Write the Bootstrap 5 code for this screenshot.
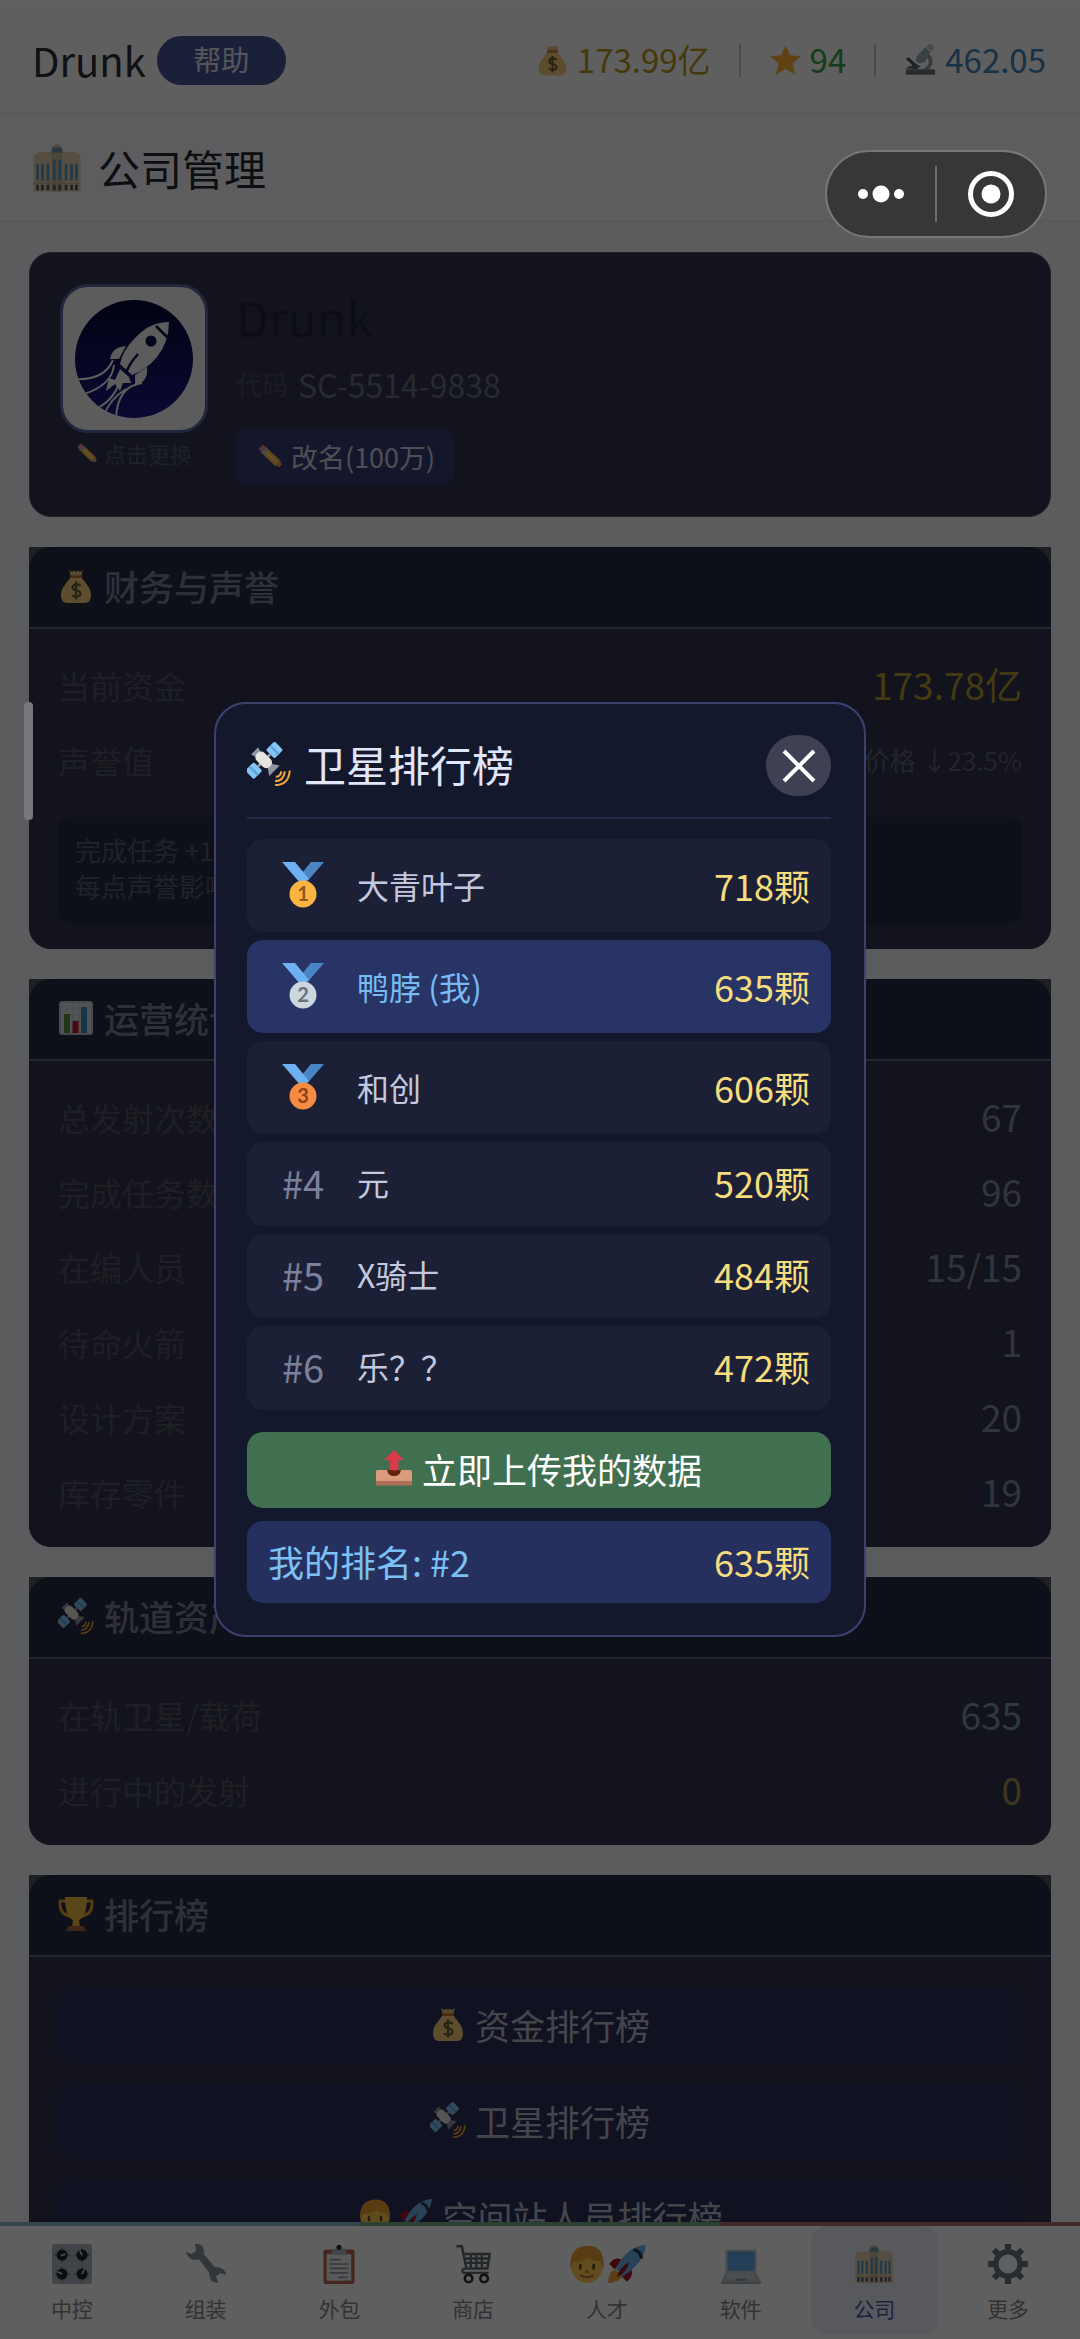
<!DOCTYPE html>
<html lang="zh-CN">
<head>
<meta charset="utf-8">
<meta name="viewport" content="width=device-width, initial-scale=1">
<title>公司管理</title>
<link rel="stylesheet" href="https://cdn.jsdelivr.net/npm/bootstrap@5.3.0/dist/css/bootstrap.min.css">
<style>
  body { font-family: "Noto Sans CJK SC", sans-serif; background: #f0f3f8; color: #2a2d36; overflow: hidden; line-height: 1.5; }
  a { text-decoration: none; }
  svg { display: block; flex: none; }
  .ico { width: 36px; height: 36px; }
  .ico-lg { width: 50px; height: 50px; }
  .ico-sm { width: 26px; height: 26px; }

  .topbar { height: 114px; padding: 6px 34px 0 32px; background: #fdfdfd; border-top: 2px solid #fff; border-bottom: 2px solid #ebecee; }
  .player { font-size: 40px; margin-right: 11px; }
  .help-btn { width: 129px; height: 49px; border-radius: 25px; background: #485698; color: #e2e4f0; font-size: 28px; line-height: 1; padding: 0 0 2px; }
  .stats { font-size: 33px; gap: 28px; }
  .stats .ico { width: 33px; height: 34px; }
  .stats .vr { width: 2px; height: 32px; align-self: center; background: #222; }
  .c-gold { color: #b8961e; } .c-green { color: #38a04c; } .c-blue { color: #3f82bb; }

  .titlebar { height: 108px; padding: 2px 32px 0; background: #f6f8fc; border-bottom: 2px solid #e8eaee; font-size: 42px; color: #23262f; }
  main { padding: 30px 29px; }
  .stack { display: flex; flex-direction: column; gap: 30px; }

  .profile { border: 1px solid #50535f; border-radius: 22px; background: #30334b; padding: 31px 30px; }
  .logo-box { width: 148px; height: 149px; border-radius: 28px; border: 3px solid #5a66a0; background: #f4f4f4; }
  .logo-box svg { width: 120px; height: 120px; }
  .swap { font-size: 22px; line-height: 40px; color: #505872; gap: 6px; background: none; border: 0; padding: 0; }
  .company { font-size: 48px; line-height: 64px; color: #232639; }
  .code-line { font-size: 26px; line-height: 48px; color: #464a5a; margin: 12px 0 21px; }
  .code-no { font-size: 32px; color: #6b7080; margin-left: 10px; }
  .rename { height: 56px; border-radius: 12px; background: #363f74; color: #cfd2de; font-size: 27px; line-height: 1; padding: 0 18px 2px 20px; gap: 8px; }

  .panel { border: 0; border-radius: 0 0 22px 22px; background: #50535f; overflow: hidden; }
  .panel .card-header { height: 82px; border-radius: 22px 22px 0 0; border-bottom: 2px solid #61656f; background: #242a42; color: #7c8195; font-size: 35px; padding: 0 29px 2px; gap: 10px; }
  .panel .card-body { background: #30334a; padding: 20px 29px 16px; color: #50535f; font-size: 32px; }
  .kv { height: 75px; padding-bottom: 4px; }
  .kv dt { font-weight: 400; }
  .kv dd { margin: 0; font-size: 37px; color: #848ba0; }
  .kv .v-gold { color: #b59a32; } .kv .v-teal { color: #7a98a2; } .kv .v-amber { color: #a69350; }
  .kv .v-note { font-size: 26px; color: #5d6172; }
  .note { background: #262b43; border-radius: 14px; padding: 15px 17px 19px; margin: 18px 0 10px; font-size: 26px; line-height: 36px; color: #565a69; }
  .rank-btn { width: 100%; height: 76px; border-radius: 18px; background: #2c3059; color: #b8bac6; font-size: 35px; line-height: 1; gap: 9px; padding: 0 12px 4px; }
  .rank-list { gap: 20px; padding-top: 11px; }

  .tabs { height: 117px; background: #fdfdfd; border-top: 4px solid; border-image: linear-gradient(90deg, #86b9c6 0 33.3%, #77ae86 33.3% 66.6%, #b56d72 66.6%) 1; padding: 0 5px 3px; }
  .tabs a { height: 109px; margin: 0 3px; border-radius: 16px; color: #84868c; font-size: 21px; line-height: 32px; padding-top: 18px; gap: 8px; }
  .tabs a.active { background: #e8ebf8; color: #4a5ba5; }
  .tabs .ico { width: 40px; height: 40px; }

  .modal-backdrop { --bs-backdrop-opacity: .625; }
  .modal-dialog { max-width: 652px; }
  .board { border: 2px solid #3b4270; border-radius: 32px; background: #14182d; padding: 31px 33px 32px 31px; color: #e2e6fa; }
  .board .modal-header { padding: 0 0 21px; border-bottom: 2px solid #272c4a; border-radius: 0; font-size: 42px; }
  .board h2 { font-size: 42px; line-height: 56px; font-weight: 400; gap: 13px; padding-bottom: 4px; }
  .close-btn { width: 65px; height: 61px; border-radius: 31px; background: #3e4154; }
  .score-row { border-radius: 16px; background: #1c2036; padding: 0 21px 4px 20px; height: 84px; color: #c4c8de; font-size: 32px; }
  .score-row.medal { height: 93px; padding-bottom: 2px; }
  .score-row.me { background: #273465; color: #78baf2; }
  .place { width: 72px; margin-right: 18px; font-size: 38px; color: #7c809c; }
  .place svg { width: 42px; height: 46px; }
  .score { font-size: 36px; color: #f5dc7c; }
  .upload { height: 76px; margin: 22px 0 13px; border-radius: 16px; background: #40704f; color: #fff; font-size: 35px; line-height: 1; gap: 10px; padding: 0 12px 4px; }
  .mine { height: 82px; border-radius: 16px; background: #26305e; color: #7cc0f5; font-size: 36px; padding: 0 21px 2px; }

  .capsule { position: fixed; z-index: 1100; top: 150px; right: 33px; width: 222px; height: 88px; border: 2px solid #77787a; border-radius: 44px; background: #373737; }
  .capsule button { flex: 1; background: none; border: 0; height: 84px; padding: 0; display: flex; align-items: center; justify-content: center; }
  .capsule i { width: 2px; height: 56px; background: #6c6c6c; }
  .edge-bar { position: fixed; z-index: 1100; top: 702px; left: 24px; width: 9px; height: 118px; border-radius: 4px; background: #76777a; }
</style>
<script src="https://cdn.jsdelivr.net/npm/bootstrap@5.3.0/dist/js/bootstrap.bundle.min.js"></script>
</head>
<body>

<svg width="0" height="0" class="position-absolute" aria-hidden="true">
  <defs>
    <symbol id="bag" viewBox="0 0 36 36"><path d="M11 2l3 2 2-1.500 2 1.500 2-1.500 2 1.500 3-2-2 7H13z" fill="#f0c078"/><path d="M12.500 9h11C26 14 33 19 33 27c0 5-2 8-6 8H9c-4 0-6-3-6-8 0-8 7-13 9.500-18z" fill="#f5cc7e"/><path d="M12 7.500h12v2.500H12z" fill="#b87333"/><path d="M22.500 18c-1-2-8-2.500-8 1.500s8 2 8 6-7 4-8.500 1.500M18 13.500v18" fill="none" stroke="#6b5b3a" stroke-width="2.200"/></symbol>
    <symbol id="star" viewBox="0 0 36 36"><path d="M18 1.500l4.800 11.300 12.200 1-9.300 8L28.600 34 18 27.500 7.400 34l2.900-12.200-9.300-8 12.200-1z" fill="#ffac33"/></symbol>
    <symbol id="scope" viewBox="0 0 36 36"><path d="M24 10c9 3 9 13 3 18h-6c7-4 8-10 3-14z" fill="#8899a6"/><path d="M3 28h29q2 0 2 3v3H2v-3q0-3 1-3z" fill="#66757f"/><path d="M14 14l9-10 6 5-6 11-7 2-3-3z" fill="#99aab5"/><path d="M24 4l4-4 5 3-2 6z" fill="#b8c6d0"/><path d="M2 17l3-2 10 9-2 3z" fill="#4a5560"/><path d="M1 27l12-5 5 3-4 3z" fill="#58636d"/></symbol>
    <symbol id="building" viewBox="0 0 36 36"><path d="M1 35V11q0-4 5-4.500h8q0-5.500 4-5.500t4 5.500h8q5 .5 5 4.500v24z" fill="#e3cfaa"/><path d="M14 5h8v30h-8z" fill="#cdbc9c"/><path d="M14.500 3h7l.5 4h-8z" fill="#6b99b4"/><path d="M16 1h4v2h-4z" fill="#dcc59a"/><path d="M4 15v12M7.500 15v12M11.500 15v12M16 12v15M20 12v15M24.500 15v12M28.500 15v12M32 15v12" stroke="#5598c0" stroke-width="1.900"/><path d="M4 30v4M7.500 30v4M11.500 30v4M16 30v4M20 30v4M24.500 30v4M28.500 30v4M32 30v4" stroke="#55585d" stroke-width="2"/><path d="M1 29h34" stroke="#cbb893"/></symbol>
    <symbol id="pencil" viewBox="0 0 36 36"><path d="M2 8l6-6 5 4-7 7z" fill="#e87f96"/><path d="M5.500 13l7.500-7 3 3-7.500 7z" fill="#b7c2ca"/><path d="M8.500 16L16 9l16 15-7 8z" fill="#f6bd41"/><path d="M12 12l17 16" stroke="#ffd983" stroke-width="3"/><path d="M25 32l7-8 3 10z" fill="#d6a06b"/><path d="M31 34l3-4 1 5z" fill="#292f33"/></symbol>
    <symbol id="chart" viewBox="0 0 36 36"><rect x="1" y="1" width="34" height="34" rx="3" fill="#b9c4cc"/><rect x="3" y="3" width="30" height="30" fill="#d9e0e4"/><path d="M3 9h30M3 15h30M3 21h30M3 27h30M9 3v30M15 3v30M21 3v30M27 3v30" stroke="#c2ccd2" stroke-width=".8"/><path fill="#5c913b" d="M6 14h6v19H6z"/><path fill="#be1931" d="M14.500 21h6v12h-6z"/><path fill="#4289c1" d="M23 7h6v26h-6z"/></symbol>
    <symbol id="sat" viewBox="0 0 36 36"><g transform="rotate(-45 14 15)"><rect x="-3" y="10" width="10" height="10" rx="1.500" fill="#86c5f5"/><path d="M2 10v10" stroke="#5ba5dd" stroke-width="2"/><rect x="21" y="10" width="10" height="10" rx="1.500" fill="#86c5f5"/><path d="M26 10v10" stroke="#5ba5dd" stroke-width="2"/><path d="M7 15h14" stroke="#99a6b0" stroke-width="2"/><path d="M11 8l-1-4h8l-1 4zM12 21h4l4 6H8z" fill="#8d979e"/><rect x="9.500" y="7" width="9" height="15" rx="4" fill="#e5e4df"/></g><path d="M23 32q7 0 8-8M23.500 28.500q4 0 4.500-4.500M23 35.300q11 0 12-12" fill="none" stroke="#f0a43c" stroke-width="1.700"/></symbol>
    <symbol id="cup" viewBox="0 0 36 36"><path d="M8 5H2q-1 14 11 15M28 5h6q1 14-11 15" fill="none" stroke="#dfa12e" stroke-width="3"/><path d="M7 1h22q0 20-8 23l1 7h-8l1-7Q7 21 7 1z" fill="#f0bd42"/><path d="M11 30h14l3 5H8z" fill="#b0653c"/></symbol>
    <symbol id="boy" viewBox="0 0 36 36"><ellipse cx="18" cy="19" rx="14.500" ry="16" fill="#ffcb4c"/><path d="M3 21Q2 2 18 1.500T33 21q-2 0-3-6-7 1-10-3-5 4-14 4-1 3-3 5z" fill="#eb9d35"/><path d="M12 19v3M24 19v3" stroke="#664e27" stroke-width="2.500" stroke-linecap="round"/><path d="M12 28q6 4 12 0" fill="none" stroke="#c1694f" stroke-width="2"/><path d="M16.500 25h3" stroke="#c1694f" stroke-width="2"/></symbol>
    <symbol id="rocket" viewBox="0 0 36 36"><path d="M2 18q5-7 11-4l-6 9zM18 34q6-5 4-11l-9 6z" fill="#a0182b"/><path d="M1 35q0-9 6-12l7 6q-4 6-13 6z" fill="#f4a63a"/><path d="M35 1Q18 2 8 22l6 7Q33 18 35 1z" fill="#6bb0ea"/><path d="M24 5q6 1 7 8" fill="none" stroke="#2d3a46" stroke-width="3"/><path d="M9 30q1-8 11-14-2 10-11 14z" fill="#a0182b"/></symbol>
    <symbol id="dials" viewBox="0 0 36 36"><rect width="36" height="36" rx="3" fill="#a9b6bf"/><g stroke="#66757f"><path d="M2 10h14M9 3v14M20 10h14M27 3v14M2 27h14M9 20v14M20 27h14M27 20v14"/></g><g fill="#202427"><circle cx="9" cy="10" r="5"/><circle cx="27" cy="10" r="5"/><circle cx="9" cy="27" r="5"/><circle cx="27" cy="27" r="5"/></g><path d="M8 10.500l4-1.500M27 10l-2-4M9 27l-4-2M27 27l2-4" stroke="#ccd6dd" stroke-width="1.500"/></symbol>
    <symbol id="wrench" viewBox="0 0 36 36"><path d="M8 0q9-1 8 9l10 12q9-1 10 7l-5-2-4 3 2 6q-9 0-8-9L12 14Q2 16 0 7l5 2 4-3z" fill="#80929f"/></symbol>
    <symbol id="clip" viewBox="0 0 36 36"><rect x="4" y="5" width="28" height="31" rx="2" fill="#b8664a"/><path d="M7 9h22v24H7z" fill="#eef0f2"/><path d="M10 10l3-6h3q2-4 4 0h3l3 6z" fill="#aebac3"/><circle cx="18" cy="3" r="2.300" fill="#292f33"/><path d="M9.500 14h10M9.500 18h17M9.500 22h17M9.500 26h17M17 30h9" stroke="#8899a6" stroke-width="1.500"/></symbol>
    <symbol id="cart" viewBox="0 0 36 36"><path d="M3 2h5l4 20h20M9 9h24l-2 13M9 26q-2-4 3-4M9 26h23M16 9v13M21 9v13M26 9v13M10 13h22M11 17h20" fill="none" stroke="#5d6a74" stroke-width="2.200"/><circle cx="14" cy="31" r="3.400" fill="#fff" stroke="#292f33" stroke-width="2.300"/><circle cx="28" cy="31" r="3.400" fill="#fff" stroke="#292f33" stroke-width="2.300"/></symbol>
    <symbol id="laptop" viewBox="0 0 36 36"><path d="M4 5h28v21H4z" fill="#b9c6cf"/><path d="M6 7h24v17H6z" fill="#5da4e4"/><path d="M4 26h28l4 8H0z" fill="#b9c4cb"/><path d="M0 34h36v2H0z" fill="#9aa9b4"/><path d="M6 28h24M5 30h26" stroke="#d7dee2"/><path d="M14 31h8l1 2H13z" fill="#8899a6"/></symbol>
    <symbol id="gear" viewBox="0 0 36 36"><g fill="none" stroke="#66757f"><circle cx="18" cy="18" r="11" stroke-width="5"/><path d="M18 0v7M18 29v7M0 18h7M29 18h7M5.300 5.300l5 5M25.700 25.700l5 5M5.300 30.700l5-5M25.700 10.300l5-5" stroke-width="5.500"/></g></symbol>
    <symbol id="ribbon" viewBox="0 0 42 46"><path d="M42 0H29L15 17l8 5z" fill="#4a86c5"/><path d="M0 0h13l14 17-8 5z" fill="#6db1f2"/></symbol>
    <symbol id="outbox" viewBox="0 0 36 36"><rect y="20" width="36" height="15" rx="1.500" fill="#d99b7c"/><path d="M0 31h36v3q0 1.500-2 1.500H2Q0 35.500 0 34z" fill="#b06f58"/><path d="M11 20h14q-1 6-7 6t-7-6z" fill="#662113"/><path d="M18 0l10 10h-5.500v9q-4.500 3-9 0v-9H8z" fill="#db3a4a"/></symbol>
  </defs>
</svg>

<header class="topbar d-flex align-items-center justify-content-between">
  <div class="d-flex align-items-center">
    <span class="player">Drunk</span>
    <button type="button" class="btn help-btn">帮助</button>
  </div>
  <div class="stats d-flex align-items-center">
    <span class="d-flex align-items-center gap-2 c-gold"><svg class="ico" aria-hidden="true"><use href="#bag"/></svg>173.99亿</span>
    <span class="vr"></span>
    <span class="d-flex align-items-center gap-2 c-green"><svg class="ico" aria-hidden="true"><use href="#star"/></svg>94</span>
    <span class="vr"></span>
    <span class="d-flex align-items-center gap-2 c-blue"><svg class="ico" aria-hidden="true"><use href="#scope"/></svg>462.05</span>
  </div>
</header>

<h1 class="titlebar d-flex align-items-center gap-3 m-0 fw-normal"><svg class="ico-lg" aria-hidden="true"><use href="#building"/></svg>公司管理</h1>

<main class="stack">
  <section class="profile d-flex align-items-start">
    <div class="d-flex flex-column align-items-center">
      <div class="logo-box d-flex align-items-center justify-content-center">
        <svg viewBox="0 0 120 120" role="img" aria-label="公司标志">
          <defs><linearGradient id="sky" x1="0" y1="0" x2="0" y2="1"><stop offset="0" stop-color="#020830"/><stop offset="1" stop-color="#20188a"/></linearGradient><clipPath id="disc"><circle cx="60" cy="60" r="59"/></clipPath></defs>
          <circle cx="60" cy="60" r="59" fill="url(#sky)"/>
          <g clip-path="url(#disc)">
            <path d="M0 80Q30 82 39 61M10 95Q38 86 40 66M22 110Q42 100 47 78M42 122Q42 88 68 84M30 116Q36 100 52 90" fill="none" stroke="#f4f4f4" stroke-width="2"/>
            <path d="M95 23Q76 23 62 38 48 52 46 65L58 76Q72 71 83 58 95 43 95 23z" fill="#f4f4f4"/>
            <path d="M82 27L94 39" stroke="#080c48" stroke-width="2.500"/>
            <circle cx="77" cy="42" r="5.500" fill="#080c48"/>
            <path d="M64 55Q54 66 52 75" fill="none" stroke="#080c48" stroke-width="2.500"/>
            <path d="M52 47Q38 48 36 60L45 60zM73 68Q75 82 61 87L61 76z" fill="#f4f4f4"/>
            <path d="M46 70L55 78 57 84 49 84 46 92 41 85 32 92 35 79 41 81z" fill="#f4f4f4"/>
          </g>
        </svg>
      </div>
      <button type="button" class="swap d-flex align-items-center"><svg width="22" height="22" aria-hidden="true"><use href="#pencil"/></svg>点击更换</button>
    </div>
    <div class="ms-4 ps-1">
      <div class="company">Drunk</div>
      <div class="code-line d-flex align-items-center">代码<span class="code-no">SC-5514-9838</span></div>
      <button type="button" class="btn rename d-flex align-items-center"><svg class="ico-sm" aria-hidden="true"><use href="#pencil"/></svg>改名(100万)</button>
    </div>
  </section>

  <section class="card panel">
    <h2 class="card-header d-flex align-items-center m-0"><svg class="ico" aria-hidden="true"><use href="#bag"/></svg>财务与声誉</h2>
    <div class="card-body">
      <dl class="m-0">
        <div class="kv d-flex align-items-center justify-content-between"><dt>当前资金</dt><dd class="v-gold">173.78亿</dd></div>
        <div class="kv d-flex align-items-center justify-content-between"><dt>声誉值</dt><dd class="v-note">价格 ↓23.5%</dd></div>
      </dl>
      <div class="note">完成任务 +1<br>每点声誉影响</div>
    </div>
  </section>

  <section class="card panel">
    <h2 class="card-header d-flex align-items-center m-0"><svg class="ico" aria-hidden="true"><use href="#chart"/></svg>运营统计</h2>
    <dl class="card-body m-0">
      <div class="kv d-flex align-items-center justify-content-between"><dt>总发射次数</dt><dd>67</dd></div>
      <div class="kv d-flex align-items-center justify-content-between"><dt>完成任务数</dt><dd>96</dd></div>
      <div class="kv d-flex align-items-center justify-content-between"><dt>在编人员</dt><dd>15/15</dd></div>
      <div class="kv d-flex align-items-center justify-content-between"><dt>待命火箭</dt><dd>1</dd></div>
      <div class="kv d-flex align-items-center justify-content-between"><dt>设计方案</dt><dd>20</dd></div>
      <div class="kv d-flex align-items-center justify-content-between"><dt>库存零件</dt><dd>19</dd></div>
    </dl>
  </section>

  <section class="card panel">
    <h2 class="card-header d-flex align-items-center m-0"><svg class="ico" aria-hidden="true"><use href="#sat"/></svg>轨道资产</h2>
    <dl class="card-body m-0">
      <div class="kv d-flex align-items-center justify-content-between"><dt>在轨卫星/载荷</dt><dd class="v-teal">635</dd></div>
      <div class="kv d-flex align-items-center justify-content-between"><dt>进行中的发射</dt><dd class="v-amber">0</dd></div>
    </dl>
  </section>

  <section class="card panel">
    <h2 class="card-header d-flex align-items-center m-0"><svg class="ico" aria-hidden="true"><use href="#cup"/></svg>排行榜</h2>
    <div class="card-body">
      <div class="rank-list d-flex flex-column">
        <button type="button" class="btn rank-btn d-flex align-items-center justify-content-center"><svg class="ico" aria-hidden="true"><use href="#bag"/></svg>资金排行榜</button>
        <button type="button" class="btn rank-btn d-flex align-items-center justify-content-center"><svg class="ico" aria-hidden="true"><use href="#sat"/></svg>卫星排行榜</button>
        <button type="button" class="btn rank-btn d-flex align-items-center justify-content-center"><span class="d-flex gap-1"><svg class="ico" aria-hidden="true"><use href="#boy"/></svg><svg class="ico" aria-hidden="true"><use href="#rocket"/></svg></span>空间站人员排行榜</button>
      </div>
    </div>
  </section>
</main>

<nav class="tabs fixed-bottom d-flex">
  <a href="#" class="flex-fill w-100 d-flex flex-column align-items-center"><svg class="ico" aria-hidden="true"><use href="#dials"/></svg>中控</a>
  <a href="#" class="flex-fill w-100 d-flex flex-column align-items-center"><svg class="ico" aria-hidden="true"><use href="#wrench"/></svg>组装</a>
  <a href="#" class="flex-fill w-100 d-flex flex-column align-items-center"><svg class="ico" aria-hidden="true"><use href="#clip"/></svg>外包</a>
  <a href="#" class="flex-fill w-100 d-flex flex-column align-items-center"><svg class="ico" aria-hidden="true"><use href="#cart"/></svg>商店</a>
  <a href="#" class="flex-fill w-100 d-flex flex-column align-items-center"><span class="d-flex"><svg class="ico" aria-hidden="true"><use href="#boy"/></svg><svg class="ico" aria-hidden="true"><use href="#rocket"/></svg></span>人才</a>
  <a href="#" class="flex-fill w-100 d-flex flex-column align-items-center"><svg class="ico" aria-hidden="true"><use href="#laptop"/></svg>软件</a>
  <a href="#" class="flex-fill w-100 d-flex flex-column align-items-center active" aria-current="page"><svg class="ico" aria-hidden="true"><use href="#building"/></svg>公司</a>
  <a href="#" class="flex-fill w-100 d-flex flex-column align-items-center"><svg class="ico" aria-hidden="true"><use href="#gear"/></svg>更多</a>
</nav>

<div class="modal-backdrop show"></div>

<div class="modal d-block" role="dialog" aria-modal="true" aria-labelledby="boardTitle">
  <div class="modal-dialog modal-dialog-centered">
    <div class="modal-content board">
      <div class="modal-header d-flex align-items-center justify-content-between">
        <h2 id="boardTitle" class="d-flex align-items-center m-0"><svg width="44" height="44" aria-hidden="true"><use href="#sat"/></svg>卫星排行榜</h2>
        <button type="button" class="btn close-btn p-0 d-flex align-items-center justify-content-center" aria-label="关闭"><svg width="36" height="36" viewBox="0 0 36 36"><path d="M3 3l30 30M33 3L3 33" stroke="#fff" stroke-width="4"/></svg></button>
      </div>
      <ol class="list-unstyled d-flex flex-column gap-2 m-0 pt-3 mt-1">
        <li class="score-row medal d-flex align-items-center"><span class="place d-flex justify-content-center"><svg viewBox="0 0 42 46" role="img" aria-label="1"><use href="#ribbon"/><circle cx="21" cy="32" r="13.500" fill="#fbb442"/><text x="21" y="39" text-anchor="middle" font-family="Lato, sans-serif" font-weight="700" font-size="20" fill="#8a5a1a">1</text></svg></span><span class="flex-grow-1">大青叶子</span><span class="score">718颗</span></li>
        <li class="score-row medal me d-flex align-items-center"><span class="place d-flex justify-content-center"><svg viewBox="0 0 42 46" role="img" aria-label="2"><use href="#ribbon"/><circle cx="21" cy="32" r="13.500" fill="#ccd6dd"/><text x="21" y="39" text-anchor="middle" font-family="Lato, sans-serif" font-weight="700" font-size="20" fill="#66717a">2</text></svg></span><span class="flex-grow-1">鸭脖 (我)</span><span class="score">635颗</span></li>
        <li class="score-row medal d-flex align-items-center"><span class="place d-flex justify-content-center"><svg viewBox="0 0 42 46" role="img" aria-label="3"><use href="#ribbon"/><circle cx="21" cy="32" r="13.500" fill="#f78b43"/><text x="21" y="39" text-anchor="middle" font-family="Lato, sans-serif" font-weight="700" font-size="20" fill="#8c4419">3</text></svg></span><span class="flex-grow-1">和创</span><span class="score">606颗</span></li>
        <li class="score-row d-flex align-items-center"><span class="place text-center">#4</span><span class="flex-grow-1">元</span><span class="score">520颗</span></li>
        <li class="score-row d-flex align-items-center"><span class="place text-center">#5</span><span class="flex-grow-1">X骑士</span><span class="score">484颗</span></li>
        <li class="score-row d-flex align-items-center"><span class="place text-center">#6</span><span class="flex-grow-1">乐？？</span><span class="score">472颗</span></li>
      </ol>
      <button type="button" class="btn upload d-flex align-items-center justify-content-center"><svg class="ico" aria-hidden="true"><use href="#outbox"/></svg>立即上传我的数据</button>
      <div class="mine d-flex align-items-center justify-content-between"><span>我的排名: #2</span><span class="score">635颗</span></div>
    </div>
  </div>
</div>

<div class="capsule d-flex align-items-center">
  <button type="button" aria-label="更多操作"><svg width="48" height="20" viewBox="0 0 48 20" fill="#fff"><circle cx="6" cy="10" r="5"/><circle cx="24" cy="10" r="8.500"/><circle cx="42" cy="10" r="5"/></svg></button>
  <i></i>
  <button type="button" aria-label="关闭小程序"><svg width="48" height="48" viewBox="0 0 48 48"><circle cx="24" cy="24" r="20.500" fill="none" stroke="#fff" stroke-width="5"/><circle cx="24" cy="24" r="9.500" fill="#fff"/></svg></button>
</div>
<div class="edge-bar"></div>

</body>
</html>
